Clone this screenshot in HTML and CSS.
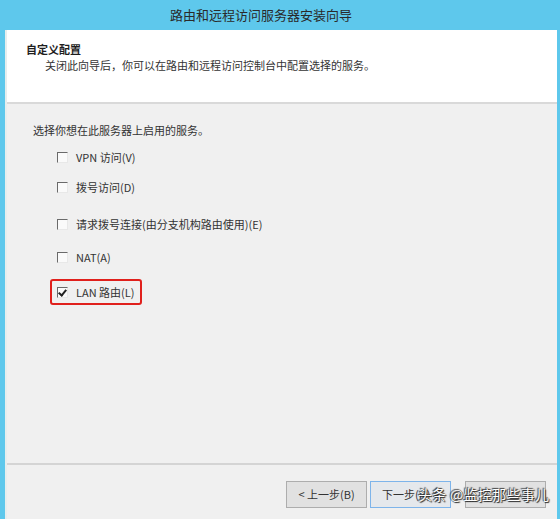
FILE: index.html
```html
<!DOCTYPE html>
<html lang="zh-CN">
<head>
    <meta charset="UTF-8">
    <title>路由和远程访问服务器安装向导</title>
    <link rel="stylesheet" href="styles.css">
</head>
<body>
    <div class="window">
        <div class="title-bar">路由和远程访问服务器安装向导</div>

        <div class="frame">
            <div class="header">
                <div class="header-title">自定义配置</div>
                <div class="header-desc">关闭此向导后，你可以在路由和远程访问控制台中配置选择的服务。</div>
            </div>

            <div class="content">
                <p class="prompt">选择你想在此服务器上启用的服务。</p>

                <div class="options">
                    <label class="option opt-vpn"><span class="box"></span>VPN 访问(V)</label>
                    <label class="option opt-dial"><span class="box"></span>拨号访问(D)</label>
                    <label class="option opt-demand"><span class="box"></span>请求拨号连接(由分支机构路由使用)(E)</label>
                    <label class="option opt-nat"><span class="box"></span>NAT(A)</label>
                    <label class="option opt-lan highlight"><span class="box checked"></span>LAN 路由(L)</label>
                </div>
            </div>

            <div class="footer">
                <button class="btn">&lt; 上一步(B)</button>
                <button class="btn focused">下一步(N) &gt;</button>
                <button class="btn cancel"></button>
                <!-- watermark sits over the buttons -->
                <span class="watermark">头条 @监控那些事儿</span>
            </div>
        </div>
    </div>
</body>
</html>
```

FILE: styles.css
```css
body {
    margin: 0;
    font-family: "Noto Sans CJK SC", "Noto Sans", sans-serif;
    color: #1e1e1e;
}

.window {
    width: 560px;
    height: 519px;
    background: #5ec8ec;
    display: flex;
    flex-direction: column;
}

.title-bar {
    height: 30px;
    line-height: 30px;
    font-size: 13px;
    color: #2a2a2a;
    text-align: center;
    padding-right: 38px;
}

.frame {
    flex: 1;
    margin: 0 3px 0 5px;
    background: #f0f0f0;
    border-left: 2px solid #e6eeee;
    display: flex;
    flex-direction: column;
    position: relative;
}

.header {
    height: 74px;
    background: #fff;
    border-bottom: 2px solid #d9d9d9;
    padding-left: 19px;
    box-sizing: border-box;
    padding-top: 11px;
}

.header-title {
    font-size: 11px;
    font-weight: bold;
    line-height: 16px;
}

.header-desc {
    font-size: 11px;
    line-height: 16px;
    padding-left: 19px;
    color: #333;
}

.content {
    flex: 1;
    padding-left: 26px;
}

.prompt {
    margin: 18px 0 0;
    font-size: 11px;
    line-height: 16px;
    color: #333;
}

.options {
    display: flex;
    flex-direction: column;
    padding-left: 24px;
}

.option {
    display: flex;
    align-items: center;
    font-size: 11px;
    height: 18px;
    color: #333;
    width: fit-content;
}

.opt-vpn { margin-top: 10px; }
.opt-dial { margin-top: 12px; }
.opt-demand { margin-top: 19px; }
.opt-nat { margin-top: 15px; }
.opt-lan { margin-top: 13px; }

.box {
    width: 9px;
    height: 9px;
    border-top: 1px solid #6a6a6a;
    border-left: 1px solid #6a6a6a;
    border-right: 1px solid #e8e8e8;
    border-bottom: 1px solid #e8e8e8;
    background: #fafafa;
    margin-right: 8px;
    position: relative;
}

.box.checked::after {
    content: "";
    position: absolute;
    left: 2px;
    top: 0;
    width: 3px;
    height: 6px;
    border-right: 2px solid #222;
    border-bottom: 2px solid #222;
    transform: rotate(40deg);
}

.highlight {
    margin-left: -7px;
    padding: 2px 5px 2px 5px;
    border: 2px solid #e0201c;
    border-radius: 3px;
}

.footer {
    height: 54px;
    border-top: 2px solid #d4d4d4;
    display: flex;
    align-items: center;
    padding-left: 279px;
    gap: 3px;
    position: relative;
}

.btn {
    width: 81px;
    height: 27px;
    margin-top: 4px;
    font-family: inherit;
    font-size: 11px;
    color: #333;
    background: #e1e1e1;
    border: 1px solid #adadad;
    padding: 0;
}

.btn.focused {
    border-color: #7eb4ea;
    background: #e5e8ec;
}

.btn.cancel {
    margin-left: 11px;
}

.watermark {
    position: absolute;
    left: 411px;
    top: 19px;
    font-size: 14px;
    color: #fff;
    letter-spacing: 0.3px;
    text-shadow: 0 0 1px #222, 1px 1px 1px #222, -1px -1px 1px #444;
}
```
